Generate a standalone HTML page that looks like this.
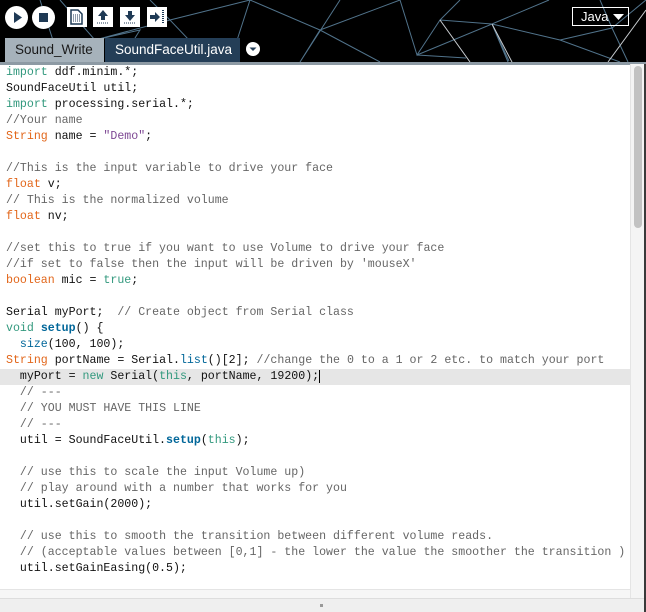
<!DOCTYPE html>
<html><head><meta charset="utf-8"><style>
*{margin:0;padding:0;box-sizing:border-box}
body{width:646px;height:612px;overflow:hidden;background:#fff;font-family:"Liberation Sans",sans-serif;position:relative}
#hdr{position:absolute;left:0;top:0;width:646px;height:62px;background:#000;overflow:hidden}
#bar{position:absolute;left:0;top:62px;width:646px;height:3px;background:#8d9aa4}
.circ{position:absolute;top:6px;width:23px;height:23px;border-radius:50%;background:#fff}
.sq{position:absolute;top:7px;width:20px;height:20px;background:#fff}
.tab{position:absolute;top:38px;height:24px;font-size:13.5px;line-height:24px;padding-left:10px}
#code{position:absolute;left:0;top:65px;width:630px;font-family:"Liberation Mono",monospace;font-size:11.6px;line-height:16px;color:#111}
#code div{height:16px;padding-left:6px;white-space:pre}
.k{color:#33997e}.t{color:#e2661a}.s{color:#7d4793}.c{color:#666}.f{color:#006699}.b{color:#006699;font-weight:bold}
#code div.hl{background:#e6e6e6}
#sb{position:absolute;left:630px;top:64px;width:14px;height:534px;background:#f4f4f4;border-left:1px solid #e4e4e4}
#th{position:absolute;left:634px;top:66px;width:8px;height:162px;border-radius:4px;background:#c2c2c2}
#rs{position:absolute;left:644px;top:64px;width:2px;height:548px;background:#3a3a3a}
#bot{position:absolute;left:0;top:598px;width:644px;height:14px;background:#efefef;border-top:1px solid #ddd}
</style></head><body>
<div id="hdr">
<svg width="646" height="62" style="position:absolute;left:0;top:0">
<g stroke="#5a7f9a" stroke-width="1" fill="none" opacity="0.9">
<path d="M40 0 L60 62 M60 0 L95 40 L60 62 M95 40 L170 20 L210 62 M170 20 L150 0 M170 20 L250 0 M250 0 L230 62 M250 0 L320 30 L300 62 M320 30 L400 0 M320 30 L380 62 M400 0 L417 55 L440 20 L492 24 L549 0 M440 20 L460 0 M417 55 L492 24 L509 61 M417 55 L466 58 M492 24 L508 62 M492 24 L560 40 L620 62 M560 40 L612 28 L646 0 M612 28 L628 62 M612 28 L600 0 M300 62 L340 0 M120 62 L140 30 L95 40"/>
</g>
<path d="M492 24 L512 62 M440 20 L470 62 M608 62 L646 10" stroke="#c8ccd0" stroke-width="1" fill="none"/>
</svg>
<div class="circ" style="left:5px"><svg width="23" height="23"><path d="M9 6 L17 11.5 L9 17Z" fill="#1f3a55"/></svg></div>
<div class="circ" style="left:32px"><svg width="23" height="23"><rect x="7" y="7" width="9" height="9" fill="#1f3a55"/></svg></div>
<div class="sq" style="left:67px"><svg width="20" height="20"><path d="M4 3 H11 L15 7 V17 H4Z" fill="none" stroke="#1f3a55" stroke-width="1.5"/><path d="M6 8h7M6 10h7M6 12h7M6 14h7" stroke="#1f3a55" stroke-dasharray="1 1"/></svg></div>
<div class="sq" style="left:93px"><svg width="20" height="20"><path d="M10 3 L15 9 H12 V13 H8 V9 H5Z" fill="#1f3a55"/><path d="M4 16h12" stroke="#1f3a55" stroke-dasharray="1 1"/></svg></div>
<div class="sq" style="left:120px"><svg width="20" height="20"><path d="M10 14 L15 8 H12 V4 H8 V8 H5Z" fill="#1f3a55"/><path d="M4 16h12" stroke="#1f3a55" stroke-dasharray="1 1"/></svg></div>
<div class="sq" style="left:147px"><svg width="20" height="20"><path d="M13 10 L8 15 V12 H3 V8 H8 V5Z" fill="#1f3a55"/><path d="M16 3v14" stroke="#1f3a55" stroke-width="2" stroke-dasharray="1 1"/></svg></div>
<div style="position:absolute;left:572px;top:7px;width:57px;height:19px;border:1px solid #fff;color:#fff;font-size:13px;line-height:17px;padding-left:8px">Java<svg width="12" height="8" style="position:absolute;left:40px;top:6px"><path d="M0 0 H11 L5.5 6Z" fill="#fff"/></svg></div>
<div class="tab" style="left:5px;width:99px;background:#a6b2bb;color:#1a1a1a">Sound_Write</div>
<div class="tab" style="left:105px;width:135px;background:#243e57;color:#fff">SoundFaceUtil.java</div>
<div style="position:absolute;left:246px;top:42px;width:14px;height:14px;border-radius:50%;background:#fff"><svg width="14" height="14"><path d="M3.5 5.5 H10.5 L7 9Z" fill="#243e57"/></svg></div>
</div>
<div id="bar"></div>
<div id="code"><div><span class="k">import</span> ddf.minim.*;</div><div>SoundFaceUtil util;</div><div><span class="k">import</span> processing.serial.*;</div><div><span class="c">//Your name</span></div><div><span class="t">String</span> name = <span class="s">"Demo"</span>;</div><div></div><div><span class="c">//This is the input variable to drive your face</span></div><div><span class="t">float</span> v;</div><div><span class="c">// This is the normalized volume</span></div><div><span class="t">float</span> nv;</div><div></div><div><span class="c">//set this to true if you want to use Volume to drive your face</span></div><div><span class="c">//if set to false then the input will be driven by 'mouseX'</span></div><div><span class="t">boolean</span> mic = <span class="k">true</span>;</div><div></div><div>Serial myPort;  <span class="c">// Create object from Serial class</span></div><div><span class="k">void</span> <span class="b">setup</span>() {</div><div>  <span class="f">size</span>(100, 100);</div><div><span class="t">String</span> portName = Serial.<span class="f">list</span>()[2]; <span class="c">//change the 0 to a 1 or 2 etc. to match your port</span></div><div class="hl">  myPort = <span class="k">new</span> Serial(<span class="k">this</span>, portName, 19200);<span style="border-left:1px solid #000"></span></div><div>  <span class="c">// ---</span></div><div>  <span class="c">// YOU MUST HAVE THIS LINE</span></div><div>  <span class="c">// ---</span></div><div>  util = SoundFaceUtil.<span class="b">setup</span>(<span class="k">this</span>);</div><div></div><div>  <span class="c">// use this to scale the input Volume up)</span></div><div>  <span class="c">// play around with a number that works for you</span></div><div>  util.setGain(2000);</div><div></div><div>  <span class="c">// use this to smooth the transition between different volume reads.</span></div><div>  <span class="c">// (acceptable values between [0,1] - the lower the value the smoother the transition )</span></div><div>  util.setGainEasing(0.5);</div></div>
<div style="position:absolute;left:0;top:589px;width:630px;height:9px;background:#f6f6f6;border-top:1px solid #e4e4e4"></div>
<div id="sb"></div><div id="th"></div><div id="rs"></div>
<div id="bot"><div style="position:absolute;left:320px;top:5px;width:3px;height:3px;background:#999"></div></div>
</body></html>
